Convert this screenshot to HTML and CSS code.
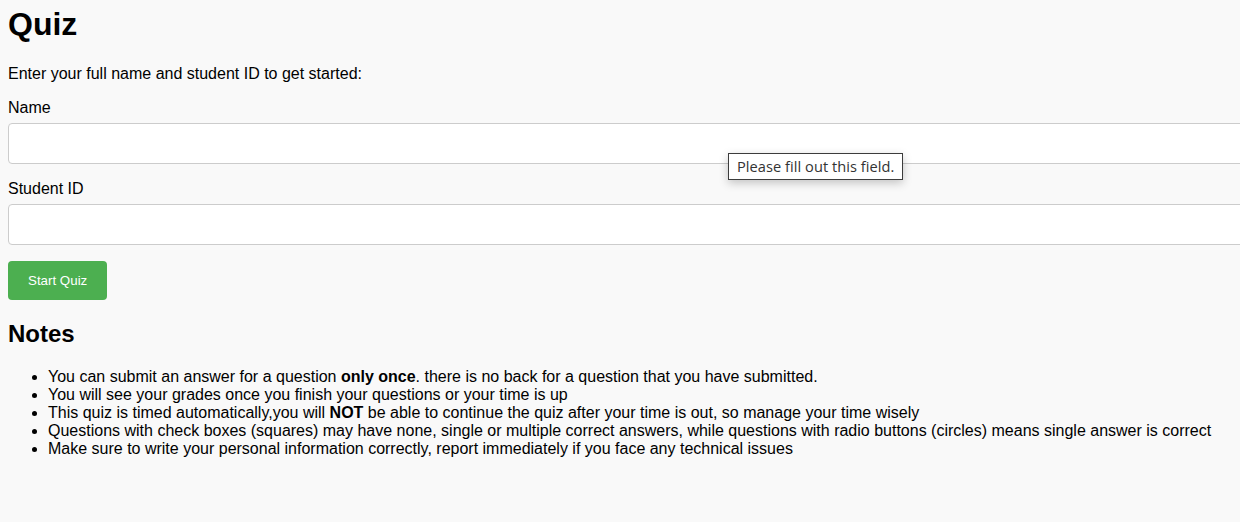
FILE: index.html
```html
<!DOCTYPE html>
<html lang="en">
<head>
<meta charset="utf-8">
<title>Quiz</title>
<link rel="stylesheet" href="styles.css">
</head>
<body>
<h1 class="title">Quiz</h1>
<p class="intro">Enter your full name and student ID to get started:</p>
<form class="start-form">
  <label class="field-label" for="name">Name</label>
  <input class="field-input" id="name" type="text" required>
  <label class="field-label" for="sid">Student ID</label>
  <input class="field-input" id="sid" type="text" required>
  <button class="start-btn" type="button">Start Quiz</button>
  <div class="validation-bubble">Please fill out this field.</div>
</form>
<h2 class="notes-title">Notes</h2>
<ul class="notes">
  <li>You can submit an answer for a question <b>only once</b>. there is no back for a question that you have submitted.</li>
  <li>You will see your grades once you finish your questions or your time is up</li>
  <li>This quiz is timed automatically,you will <b>NOT</b> be able to continue the quiz after your time is out, so manage your time wisely</li>
  <li>Questions with check boxes (squares) may have none, single or multiple correct answers, while questions with radio buttons (circles) means single answer is correct</li>
  <li>Make sure to write your personal information correctly, report immediately if you face any technical issues</li>
</ul>
</body>
</html>
```
FILE: styles.css
```css
html {
  overflow: hidden;
}
body {
  margin: 0;
  padding: 0 8px;
  background: #f9f9f9;
  color: #000;
  font-family: "Liberation Sans", Arial, sans-serif;
  font-size: 16px;
}
.title {
  font-size: 32px;
  margin: 6.1px 0 21.44px;
}
.intro {
  margin: 0 0 16px;
}
.start-form {
  position: relative;
}
.field-label {
  display: block;
}
.field-input {
  display: block;
  box-sizing: content-box;
  width: 100%;
  height: 15px;
  padding: 12px;
  margin: 6.1px 0 16px;
  border: 1px solid #ccc;
  border-radius: 4px;
  background: #fff;
  font-family: "Liberation Sans", Arial, sans-serif;
  font-size: 13.333px;
  line-height: 15px;
}
.start-btn {
  display: block;
  padding: 12px 20px;
  border: none;
  border-radius: 4px;
  background: #4caf50;
  color: #fff;
  font-family: "Liberation Sans", Arial, sans-serif;
  font-size: 13.333px;
  line-height: 15px;
}
.validation-bubble {
  position: absolute;
  left: 720px;
  top: 54px;
  padding: 4px 8px;
  border: 1px solid #3c3c3c;
  background: #fff;
  color: #333;
  font-family: "Open Sans", "DejaVu Sans", sans-serif;
  font-size: 14.6px;
  letter-spacing: 0.05px;
  line-height: 17px;
  box-shadow: 0 3px 10px rgba(0,0,0,0.22);
}
.notes-title {
  font-size: 24px;
  margin: 19.92px 0;
}
.notes {
  margin: 0;
  padding-left: 40px;
}
```
